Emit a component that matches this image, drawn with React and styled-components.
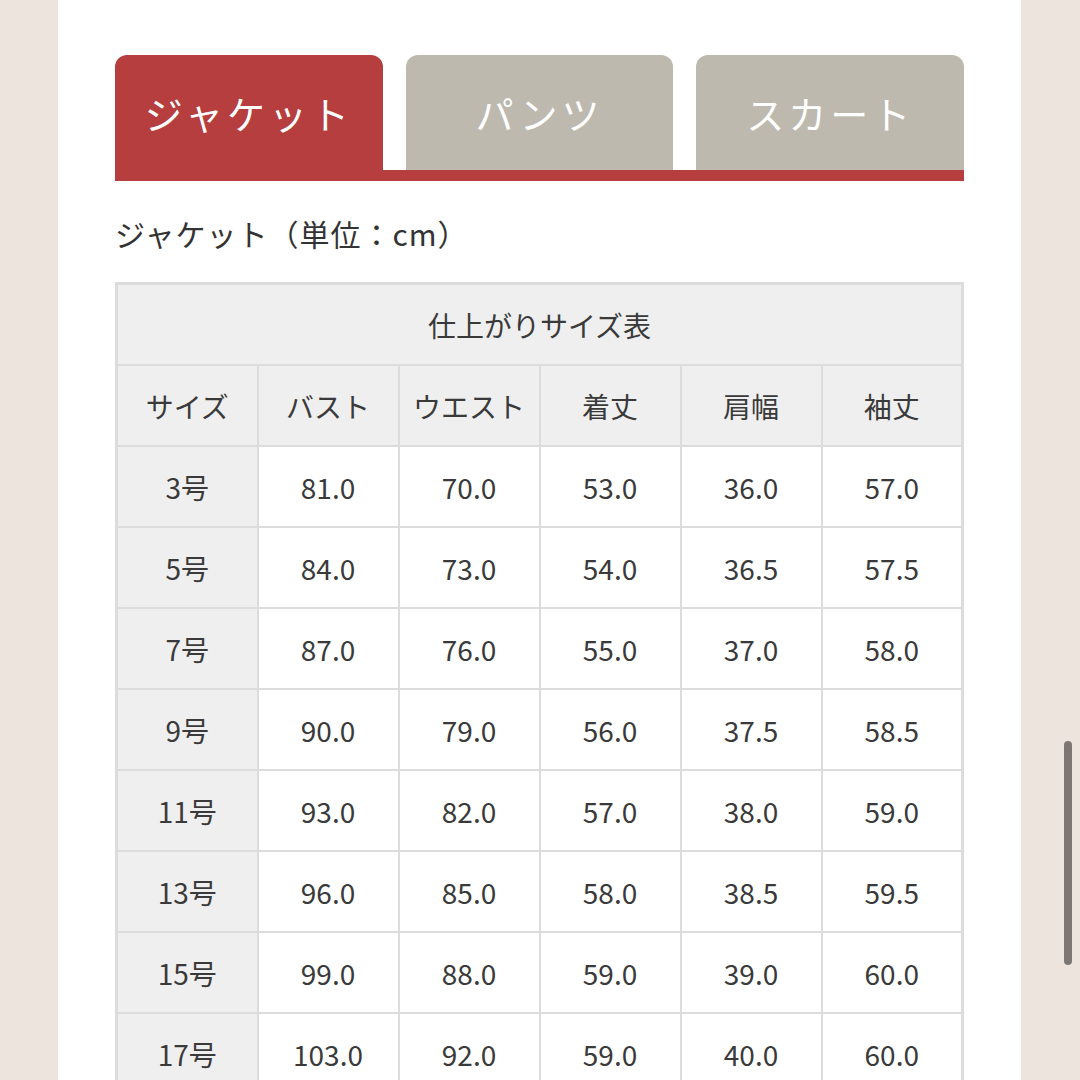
import styled, { createGlobalStyle } from 'styled-components';

const GlobalStyle = createGlobalStyle`
	html, body {
		margin: 0;
		padding: 0;
		background-color: #ede5dd;
		font-family: 'Noto Sans CJK JP', 'Noto Sans', sans-serif;
		color: #333;
	}
`;

const Page = styled.div`
	position: relative;
	height: 1080px;
	overflow: hidden;
	background-color: #ede5dd;
`;

const Panel = styled.div`
	width: 849px;
	margin-left: 58px;
	padding: 55px 57px 0;
	height: 1025px;
	background-color: #fff;
`;

const TabBar = styled.div`
	display: flex;
	gap: 23px;
	border-bottom: 11px solid #b73e3e;
`;

const Tab = styled.div`
	flex: 1;
	height: 115px;
	display: flex;
	align-items: center;
	justify-content: center;
	border-radius: 12px 12px 0 0;
	background-color: ${(p) => (p.active ? '#b73e3e' : '#bdb9ae')};
	color: #fff;
	font-size: 38px;
	letter-spacing: 4px;
	box-sizing: border-box;
`;

const Caption = styled.div`
	margin-top: 30px;
	font-size: 30px;
	line-height: 45px;
	letter-spacing: 1px;
	color: #333;
`;

const Table = styled.table`
	margin-top: 26px;
	width: 100%;
	border-collapse: collapse;
	table-layout: fixed;
	border: 3px solid #dcdcdc;
`;

const Cell = styled.td`
	height: 79px;
	padding: 0;
	text-align: center;
	vertical-align: middle;
	font-size: 28px;
	color: #3a3a3a;
	border: 2px solid #dcdcdc;
	background-color: ${(p) => (p.gray ? '#efefef' : '#fff')};
`;

const Scrollbar = styled.div`
	position: absolute;
	left: 1064px;
	top: 741px;
	width: 8px;
	height: 224px;
	border-radius: 4px;
	background-color: #7d7773;
`;

const headers = ['サイズ', 'バスト', 'ウエスト', '着丈', '肩幅', '袖丈'];

const rows = [
	['3号', '81.0', '70.0', '53.0', '36.0', '57.0'],
	['5号', '84.0', '73.0', '54.0', '36.5', '57.5'],
	['7号', '87.0', '76.0', '55.0', '37.0', '58.0'],
	['9号', '90.0', '79.0', '56.0', '37.5', '58.5'],
	['11号', '93.0', '82.0', '57.0', '38.0', '59.0'],
	['13号', '96.0', '85.0', '58.0', '38.5', '59.5'],
	['15号', '99.0', '88.0', '59.0', '39.0', '60.0'],
	['17号', '103.0', '92.0', '59.0', '40.0', '60.0'],
];

const App = () => {
	return (
		<Page>
			<GlobalStyle />
			<Panel>
				<TabBar>
					<Tab active>ジャケット</Tab>
					<Tab>パンツ</Tab>
					<Tab>スカート</Tab>
				</TabBar>
				<Caption>ジャケット（単位：cm）</Caption>
				<Table>
					<tbody>
						<tr>
							<Cell gray colSpan={6}>仕上がりサイズ表</Cell>
						</tr>
						<tr>
							{headers.map((h) => (
								<Cell gray key={h}>{h}</Cell>
							))}
						</tr>
						{rows.map((row) => (
							<tr key={row[0]}>
								{row.map((v, i) => (
									<Cell gray={i === 0} key={i}>{v}</Cell>
								))}
							</tr>
						))}
					</tbody>
				</Table>
			</Panel>
			<Scrollbar />
		</Page>
	);
};

export default App;
